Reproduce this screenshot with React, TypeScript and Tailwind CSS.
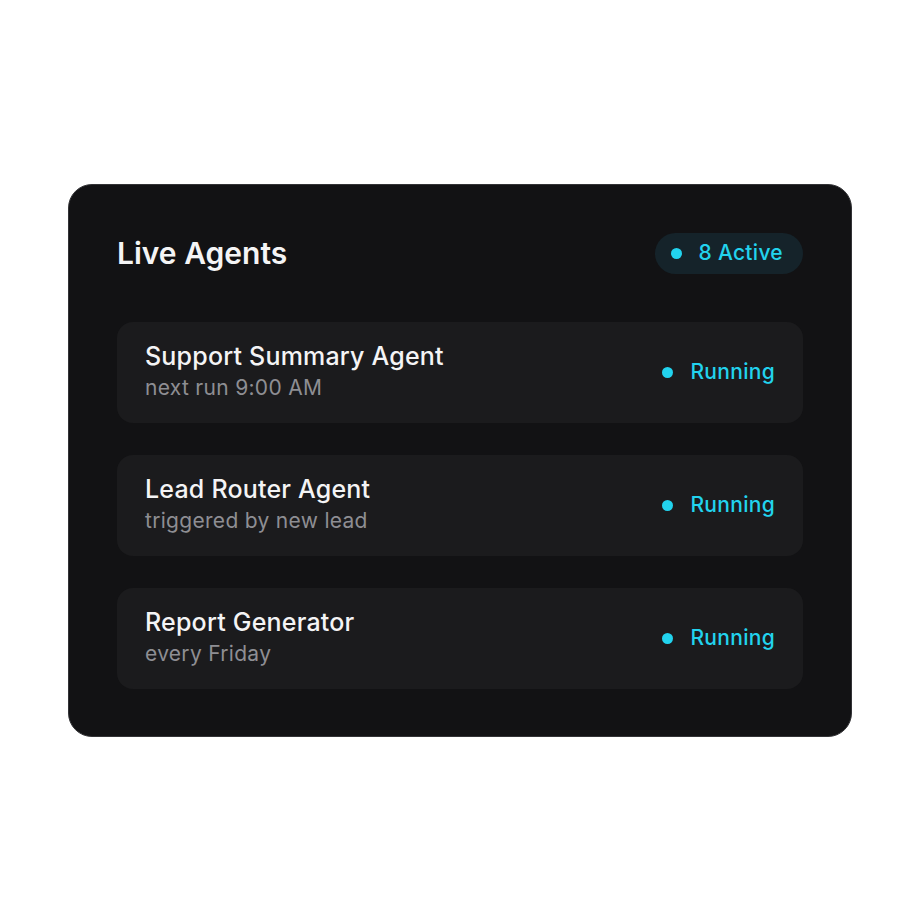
import React from 'react';

type Agent = { name: string; detail: string; status: string };

const agents: Agent[] = [
  { name: 'Support Summary Agent', detail: 'next run 9:00 AM', status: 'Running' },
  { name: 'Lead Router Agent', detail: 'triggered by new lead', status: 'Running' },
  { name: 'Report Generator', detail: 'every Friday', status: 'Running' },
];

const AgentRow: React.FC<{ agent: Agent }> = ({ agent }) => (
  <div className="flex items-center justify-between h-[101px] px-7 rounded-2xl bg-[#1b1b1d]">
    <div className="flex flex-col">
      <span className="text-[25px] leading-[32px] font-medium text-[#f4f4f5] tracking-[0.2px]">{agent.name}</span>
      <span className="text-[21px] leading-[32px] text-[#8e8e93] tracking-[0.3px]">{agent.detail}</span>
    </div>
    <div className="flex items-center gap-[17px]">
      <span className="w-[11px] h-[11px] rounded-full bg-[#22d3ee]" />
      <span className="text-[21px] font-medium text-[#22d3ee] tracking-[0.3px]">{agent.status}</span>
    </div>
  </div>
);

export default function App() {
  return (
    <div
      className="w-[920px] h-[920px] bg-white flex items-center justify-center"
      style={{ fontFamily: 'Inter, "Noto Sans", sans-serif' }}
    >
      <div className="w-[784px] h-[553px] rounded-[24px] bg-[#121214] border border-[#333336] p-12 flex flex-col">
        {/* header */}
        <div className="flex items-center justify-between h-[41px] mb-12">
          <h1 className="text-[30px] font-semibold text-[#f4f4f5]">Live Agents</h1>
          <div className="flex items-center gap-4 h-[41px] pl-4 pr-5 rounded-full bg-[#15232a]">
            <span className="w-[11px] h-[11px] rounded-full bg-[#22d3ee]" />
            <span className="text-[21px] font-medium text-[#22d3ee] tracking-[0.3px]">8 Active</span>
          </div>
        </div>
        <div className="flex flex-col gap-8">
          {agents.map((a) => (
            <AgentRow key={a.name} agent={a} />
          ))}
        </div>
      </div>
    </div>
  );
}
